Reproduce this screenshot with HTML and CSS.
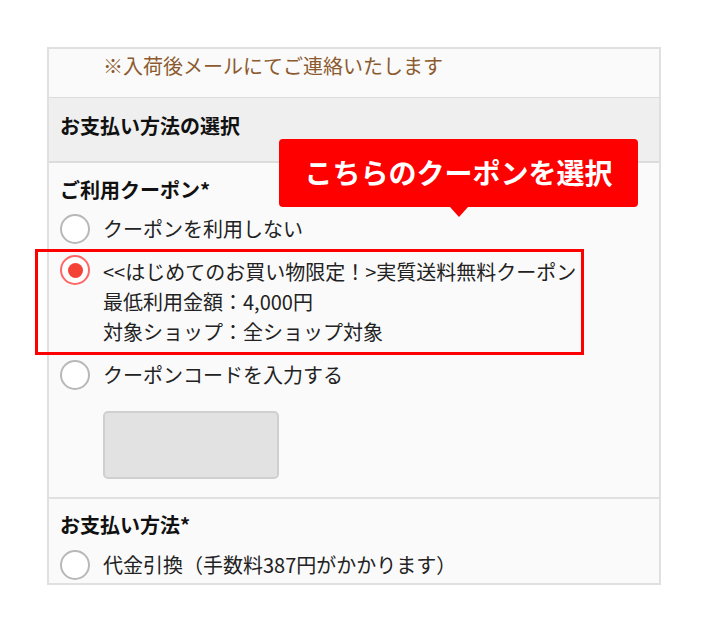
FILE: index.html
```html
<!DOCTYPE html>
<html lang="ja">
<head>
    <meta charset="UTF-8">
    <meta name="viewport" content="width=device-width, initial-scale=1.0">
    <title>お支払い方法の選択</title>
    <link rel="stylesheet" href="styles.css">
</head>
<body>
    <div class="page">
        <div class="panel">
            <div class="notice">※入荷後メールにてご連絡いたします</div>

            <div class="band">お支払い方法の選択</div>

            <div class="section coupon">
                <div class="label">ご利用クーポン*</div>

                <div class="option">
                    <span class="radio"></span>
                    <div class="text">クーポンを利用しない</div>
                </div>

                <div class="option pick">
                    <span class="radio on"></span>
                    <div class="text">
                        <div>&lt;&lt;はじめてのお買い物限定！&gt;実質送料無料クーポン</div>
                        <div>最低利用金額：4,000円</div>
                        <div>対象ショップ：全ショップ対象</div>
                    </div>
                </div>

                <div class="option">
                    <span class="radio"></span>
                    <div class="text">クーポンコードを入力する</div>
                </div>

                <div class="code-box"></div>
            </div>

            <div class="section pay">
                <div class="label">お支払い方法*</div>
                <div class="option">
                    <span class="radio"></span>
                    <div class="text">代金引換（手数料387円がかかります）</div>
                </div>
            </div>
        </div>

        <!-- 吹き出し -->
        <div class="balloon">こちらのクーポンを選択</div>
    </div>
</body>
</html>
```

FILE: styles.css
```css
body {
    margin: 0;
    background-color: #fff;
    color: #222;
    font-family: "Noto Sans CJK JP", "Noto Sans", sans-serif;
    font-size: 20px;
}
.page {
    position: relative;
    width: 710px;
    height: 633px;
    padding: 47px 0 0 47px;
    box-sizing: border-box;
}
.panel {
    width: 614px;
    border: 2px solid #e0e0e0;
    box-sizing: border-box;
    background-color: #fafafa;
}
.notice {
    color: #8c5a2e;
    line-height: 30px;
    padding: 2px 0 16px 54px;
}
.band {
    background-color: #efefef;
    border-top: 1px solid #dcdcdc;
    border-bottom: 2px solid #dcdcdc;
    font-weight: bold;
    color: #111;
    line-height: 30px;
    padding: 13px 0 20px 11px;
}
.section {
    padding: 12px 0 18px 11px;
}
.section.pay {
    border-top: 2px solid #e0e0e0;
    padding-top: 11px;
    padding-bottom: 3px;
}
.label {
    font-weight: bold;
    color: #111;
    line-height: 30px;
    margin-bottom: 9px;
}
.pay .label {
    margin-bottom: 10px;
}
.option {
    display: flex;
    align-items: flex-start;
    gap: 13px;
    line-height: 30px;
}
.option + .option {
    margin-top: 13px;
}
.radio {
    flex: none;
    width: 30px;
    height: 30px;
    border: 2px solid #b8b8b8;
    border-radius: 50%;
    background-color: #fff;
    box-sizing: border-box;
}
.radio.on {
    border-color: #f66;
    margin-top: -2px;
    display: flex;
    align-items: center;
    justify-content: center;
}
.radio.on::before {
    content: "";
    width: 15px;
    height: 15px;
    border-radius: 50%;
    background-color: #f44336;
}
.pick {
    position: relative;
}
.pick::after {
    content: "";
    position: absolute;
    left: -25px;
    right: 75px;
    top: -8px;
    bottom: -8px;
    border: 3px solid #f00;
}
.code-box {
    width: 176px;
    height: 68px;
    margin: 21px 0 0 43px;
    background-color: #e2e2e2;
    border: 2px solid #cfcfcf;
    border-radius: 5px;
    box-sizing: border-box;
}
.balloon {
    position: absolute;
    left: 279px;
    top: 139px;
    width: 359px;
    height: 68px;
    background-color: #f00;
    border-radius: 4px;
    color: #fff;
    font-size: 28px;
    font-weight: bold;
    line-height: 66px;
    text-align: center;
}
.balloon::after {
    content: "";
    position: absolute;
    left: 171px;
    bottom: -10px;
    border-left: 9px solid transparent;
    border-right: 9px solid transparent;
    border-top: 10px solid #f00;
}
```
